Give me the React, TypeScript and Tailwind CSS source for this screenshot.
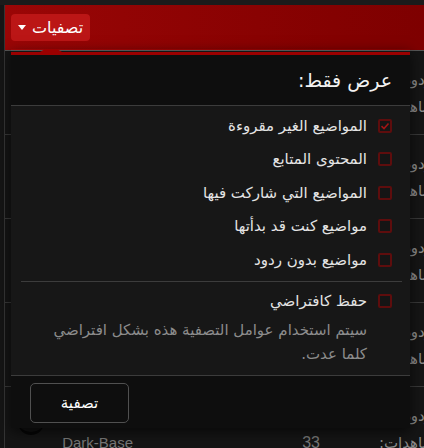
import React from "react";

function Check({ checked }: { checked?: boolean }) {
  return (
    <span className="flex h-[14px] w-[14px] shrink-0 items-center justify-center rounded-[2px] border-2 border-[#5e0d0d] bg-[#151515]">
      {checked && (
        <svg width="10" height="10" viewBox="0 0 10 10">
          <path d="M1.5 5.2 L4 7.5 L8.5 2.5" fill="none" stroke="#a31414" strokeWidth="1.6" />
        </svg>
      )}
    </span>
  );
}

function Item({ label, checked }: { label: string; checked?: boolean }) {
  return (
    <label className="flex h-[33.5px] items-center gap-[11px]">
      <Check checked={checked} />
      <span className="text-[15px] text-[#e4e4e4] whitespace-nowrap">{label}</span>
    </label>
  );
}

function BgRow({ extra }: { extra?: boolean }) {
  return (
    <div className="flex h-[84px] border-b border-[#383838]" dir="rtl">
      <div className="mr-[-20px] flex flex-col gap-[7px] pt-[19px] text-[15px] leading-[20px] text-[#8a8a8a]">
        <div className="mr-[12px] flex">
          <span className="w-[124px] whitespace-nowrap">ردود:</span>
        </div>
        <div className="flex">
          <span className="w-[124px] whitespace-nowrap">مشاهدات:</span>
          {extra && (
            <>
              <span className="w-[187px] font-['Liberation_Sans',sans-serif] text-[16px] text-[#777]">33</span>
              <span className="font-['Liberation_Sans',sans-serif] text-[15px] text-[#777]">Dark-Base</span>
            </>
          )}
        </div>
      </div>
      {extra && (
        <div className="mr-auto ml-[13px] mt-[22px] h-[26px] w-[26px] rounded-full border-b-[3px] border-[#060606] bg-[#121212]" />
      )}
    </div>
  );
}

export default function App() {
  return (
    <div className="relative h-[448px] w-[424px] overflow-hidden bg-[#151515] font-['DejaVu_Sans','Liberation_Sans',sans-serif]">
      <div className="h-[5px] bg-[#1b1b1b]" />
      <div className="ml-[4px] border-l border-[#353535]">
        <div className="flex h-[46px] items-center border-b border-[#555] bg-gradient-to-r from-[#9a0606] to-[#7e0000] pl-[6px]">
          <button className="flex h-[27px] items-center gap-[6px] rounded-[4px] bg-[#bb1616] px-[7px] text-white">
            <svg width="8" height="5" viewBox="0 0 8 5">
              <path d="M0 0 H8 L4 5 Z" fill="#fff" />
            </svg>
            <span className="text-[16px] leading-none" dir="rtl">تصفيات</span>
          </button>
        </div>
        <BgRow />
        <BgRow />
        <BgRow />
        <BgRow />
        <BgRow extra />
      </div>

      <div className="absolute left-[11px] top-[49px] z-10 w-[399px] shadow-[0_4px_12px_rgba(0,0,0,0.6)]">
        <div className="ml-[29px] h-0 w-[22px] border-x-[5px] border-b-[3px] border-x-transparent border-b-[#9b0000]" />
        <div className="border-t-[3px] border-[#9b0000]" dir="rtl">
          <div className="flex h-[51px] items-center border-b border-[#3c3c3c] bg-[#0e0e0e] pr-[18px]">
            <h3 className="text-[19px] text-[#f2f2f2]">عرض فقط:</h3>
          </div>
          <div className="bg-[#171717] pb-[9px]">
            <div className="pr-[18px] pt-[3px]">
              <Item label="المواضيع الغير مقروءة" checked />
              <Item label="المحتوى المتابع" />
              <Item label="المواضيع التي شاركت فيها" />
              <Item label="مواضيع كنت قد بدأتها" />
              <Item label="مواضيع بدون ردود" />
            </div>
            <div className="mr-[8px] ml-[10px] mt-[4px] border-t border-[#3c3c3c]" />
            <div className="pr-[18px] pt-[3px]">
              <Item label="حفظ كافتراضي" />
              <p className="pr-[25px] pl-[20px] text-[15px] leading-[24px] text-[#8c8c8c]">
                سيتم استخدام عوامل التصفية هذه بشكل افتراضي كلما عدت.
              </p>
            </div>
          </div>
          <div className="flex border-t border-[#3c3c3c] bg-[#0e0e0e] pb-[5px] pt-[7px] pl-[19px]" dir="ltr">
            <button className="flex h-[40px] w-[99px] items-center justify-center rounded-[5px] border border-[#505050] text-[15px] text-white">
              تصفية
            </button>
          </div>
        </div>
      </div>
    </div>
  );
}
